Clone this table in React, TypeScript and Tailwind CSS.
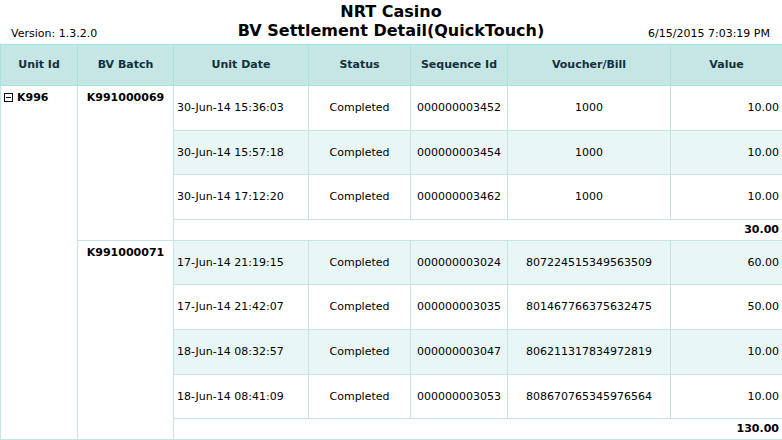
import React from 'react';

type Row = { date: string; seq: string; voucher: string; value: string };

const groups: { batch: string; rows: Row[]; total: string }[] = [
  {
    batch: 'K991000069',
    rows: [
      { date: '30-Jun-14 15:36:03', seq: '000000003452', voucher: '1000', value: '10.00' },
      { date: '30-Jun-14 15:57:18', seq: '000000003454', voucher: '1000', value: '10.00' },
      { date: '30-Jun-14 17:12:20', seq: '000000003462', voucher: '1000', value: '10.00' },
    ],
    total: '30.00',
  },
  {
    batch: 'K991000071',
    rows: [
      { date: '17-Jun-14 21:19:15', seq: '000000003024', voucher: '807224515349563509', value: '60.00' },
      { date: '17-Jun-14 21:42:07', seq: '000000003035', voucher: '801467766375632475', value: '50.00' },
      { date: '18-Jun-14 08:32:57', seq: '000000003047', voucher: '806211317834972819', value: '10.00' },
      { date: '18-Jun-14 08:41:09', seq: '000000003053', voucher: '808670765345976564', value: '10.00' },
    ],
    total: '130.00',
  },
];

const font = { fontFamily: '"DejaVu Sans", Verdana, sans-serif' };

const th = 'border border-[#a9e2e2] bg-[#c6e5e5] text-[#12303c] font-bold text-[11px] h-[41px] text-center align-middle';
const td = 'border border-[#c6e4e4] text-[11px] text-black align-middle h-[44.6px] pt-[1px]';

const MinusBox = () => (
  <svg width="9" height="9" viewBox="0 0 9 9" className="inline-block mr-[4px] -mt-[2px] align-middle">
    <rect x="0.5" y="0.5" width="8" height="8" fill="white" stroke="#000" strokeWidth="1" />
    <line x1="2" y1="4.5" x2="7" y2="4.5" stroke="#000" strokeWidth="1" />
  </svg>
);

export default function App() {
  return (
    <div className="w-[782px] h-[440px] bg-white overflow-hidden" style={font}>
      <div className="relative h-[44px]">
        <div className="text-center font-bold text-black text-[16px] leading-[19px] pt-[2px]">
          <div>NRT Casino</div>
          <div>BV Settlement Detail(QuickTouch)</div>
        </div>
        <div className="absolute left-[11px] top-[26px] text-[11px] text-black">Version: 1.3.2.0</div>
        <div className="absolute right-[12px] top-[26px] text-[11px] text-black">6/15/2015 7:03:19 PM</div>
      </div>
      <table className="border-collapse w-[782px] table-fixed">
        <colgroup>
          <col className="w-[77px]" />
          <col className="w-[96px]" />
          <col className="w-[135px]" />
          <col className="w-[102px]" />
          <col className="w-[97px]" />
          <col className="w-[163px]" />
          <col className="w-[112px]" />
        </colgroup>
        <thead>
          <tr>
            <th className={th}>Unit Id</th>
            <th className={th}>BV Batch</th>
            <th className={th}>Unit Date</th>
            <th className={th}>Status</th>
            <th className={th}>Sequence Id</th>
            <th className={th}>Voucher/Bill</th>
            <th className={th}>Value</th>
          </tr>
        </thead>
        <tbody>
          {groups.map((g, gi) => (
            <React.Fragment key={g.batch}>
              {g.rows.map((r, ri) => {
                const bg = (gi === 0 ? ri % 2 === 1 : ri % 2 === 0) ? 'bg-[#e9f6f6]' : 'bg-white';
                return (
                  <tr key={r.seq} className={bg}>
                    {gi === 0 && ri === 0 && (
                      <td rowSpan={9} className="border border-[#c6e4e4] bg-white align-top pl-[3px] pt-[4px] text-[11px] font-bold text-black">
                        <MinusBox />K996
                      </td>
                    )}
                    {ri === 0 && (
                      <td rowSpan={g.rows.length + 1} className="border border-[#c6e4e4] bg-white align-top text-center pt-[4px] text-[11px] font-bold text-black">
                        {g.batch}
                      </td>
                    )}
                    <td className={`${td} pl-[3px]`}>{r.date}</td>
                    <td className={`${td} text-center`}>Completed</td>
                    <td className={`${td} text-center`}>{r.seq}</td>
                    <td className={`${td} text-center`}>{r.voucher}</td>
                    <td className={`${td} text-right pr-[3px]`}>{r.value}</td>
                  </tr>
                );
              })}
              <tr className="bg-white">
                <td colSpan={5} className="border border-[#c6e4e4] h-[21px] text-right pr-[3px] text-[11px] font-bold text-black align-middle">
                  {g.total}
                </td>
              </tr>
            </React.Fragment>
          ))}
        </tbody>
      </table>
    </div>
  );
}
